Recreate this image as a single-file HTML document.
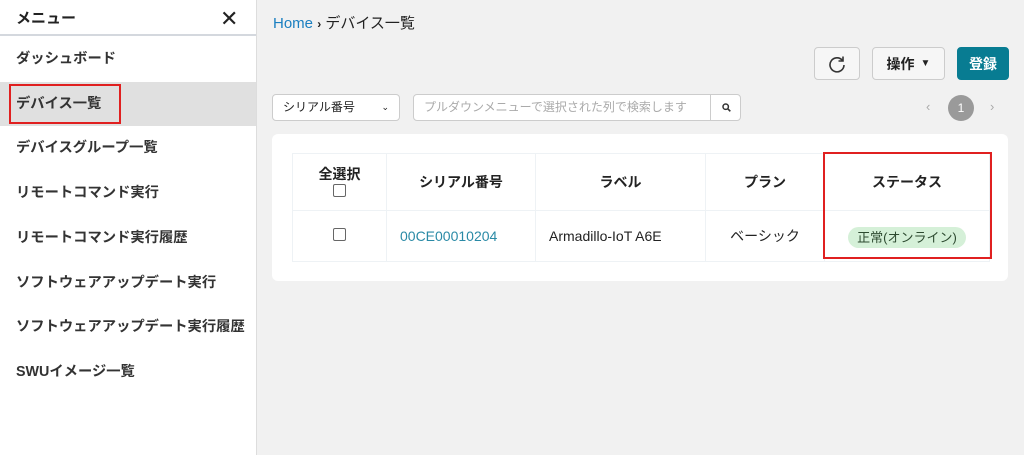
<!DOCTYPE html>
<html><head><meta charset="utf-8"><style>
*{box-sizing:border-box;margin:0;padding:0}
body{width:1024px;height:455px;overflow:hidden;font-family:"Liberation Sans","Noto Sans CJK JP",sans-serif;background:#f1f1f1;position:relative;color:#222}
.side{position:absolute;left:0;top:0;width:257px;height:455px;background:#fff;border-right:1px solid #ddd}
.hd{height:36px;border-bottom:2px solid #d4d8de;display:flex;align-items:center;padding-left:16px;font-size:15px;font-weight:bold;position:relative}
.x{position:absolute;left:220px;top:6px;font-size:22px;font-weight:normal}
.item{position:absolute;left:0;width:256px;height:44px;line-height:44px;padding-left:16px;font-size:14.3px;font-weight:bold;color:#333;white-space:nowrap}
.abs{position:absolute}
.btn{position:absolute;border:1px solid #ccc;border-radius:4px;background:#f6f6f6;display:flex;align-items:center;justify-content:center;font-size:14px;font-weight:bold}
table{border-collapse:collapse;position:absolute;left:292px;top:153px;width:698px}
td,th{border:1px solid #eef2f5;text-align:center;font-size:14px}
th{height:57px;font-weight:bold}
td{height:51px}
.cb{display:inline-block;width:13px;height:13px;border:1.5px solid #666;border-radius:2px}
</style></head><body>
<div class="side">
<div class="hd">メニュー<span class="x">✕</span></div>
<div class="item" style="top:37px">ダッシュボード</div>
<div class="item" style="top:82px;background:#e0e0e0"><span style="position:absolute;left:9px;top:2px;width:112px;height:40px;border:2px solid #e02020"></span>デバイス一覧</div>
<div class="item" style="top:126px">デバイスグループ一覧</div>
<div class="item" style="top:171px">リモートコマンド実行</div>
<div class="item" style="top:216px">リモートコマンド実行履歴</div>
<div class="item" style="top:261px">ソフトウェアアップデート実行</div>
<div class="item" style="top:305px">ソフトウェアアップデート実行履歴</div>
<div class="item" style="top:350px">SWUイメージ一覧</div>
</div>
<div class="abs" style="left:273px;top:12px;font-size:15px"><span style="color:#1a7fc1">Home</span> <b style="font-size:12px">›</b> デバイス一覧</div>
<div class="btn" style="left:814px;top:47px;width:46px;height:33px"><svg width="18" height="18" viewBox="0 0 18 18"><path d="M14.5 5.5A7 7 0 1 0 16 10" fill="none" stroke="#333" stroke-width="1.6"/><path d="M15 1.5V6H10.5" fill="none" stroke="#333" stroke-width="1.6"/></svg></div>
<div class="btn" style="left:872px;top:47px;width:73px;height:33px">操作 <span style="font-size:10px;margin-left:6px">▼</span></div>
<div class="btn" style="left:957px;top:47px;width:52px;height:33px;background:#087c92;border-color:#087c92;color:#fff">登録</div>
<div class="abs" style="left:272px;top:94px;width:128px;height:27px;background:#fff;border:1px solid #ccc;border-radius:4px;font-size:12px;line-height:25px;padding-left:10px">シリアル番号<span style="position:absolute;right:10px;font-size:9px">⌄</span></div>
<div class="abs" style="left:413px;top:94px;width:328px;height:27px;background:#fff;border:1px solid #ccc;border-radius:4px;font-size:12px;line-height:25px;padding-left:10px;color:#aaa">プルダウンメニューで選択された列で検索します<span style="position:absolute;left:296px;top:0;width:31px;height:25px;border-left:1px solid #ccc"><svg style="position:absolute;left:11px;top:8px" width="9" height="9" viewBox="0 0 9 9"><circle cx="3.7" cy="3.7" r="2.7" fill="none" stroke="#333" stroke-width="1.5"/><path d="M5.7 5.7L8.3 8.3" stroke="#333" stroke-width="1.6"/></svg></span></div>
<div class="abs" style="left:926px;top:99px;color:#aaa;font-size:13px">‹</div>
<div class="abs" style="left:948px;top:95px;width:26px;height:26px;border-radius:50%;background:#9a9a9a;color:#fff;font-size:12px;text-align:center;line-height:26px">1</div>
<div class="abs" style="left:990px;top:99px;color:#aaa;font-size:13px">›</div>
<div class="abs" style="left:272px;top:134px;width:736px;height:147px;background:#fff;border-radius:6px"></div>
<table>
<tr><th style="width:94px">全選択<br><span class="cb"></span></th><th style="width:149px">シリアル番号</th><th style="width:170px">ラベル</th><th style="width:119px">プラン</th><th>ステータス</th></tr>
<tr><td><span class="cb"></span></td><td style="color:#2a8aa6;text-align:left;padding-left:13px">00CE00010204</td><td style="text-align:left;padding-left:13px">Armadillo-IoT A6E</td><td>ベーシック</td><td><span style="background:#d5f0d8;border-radius:12px;padding:3px 9px;font-size:13px;color:#2d4a30">正常(オンライン)</span></td></tr>
</table>
<div class="abs" style="left:823px;top:152px;width:169px;height:107px;border:2px solid #e02020"></div>
</body></html>
